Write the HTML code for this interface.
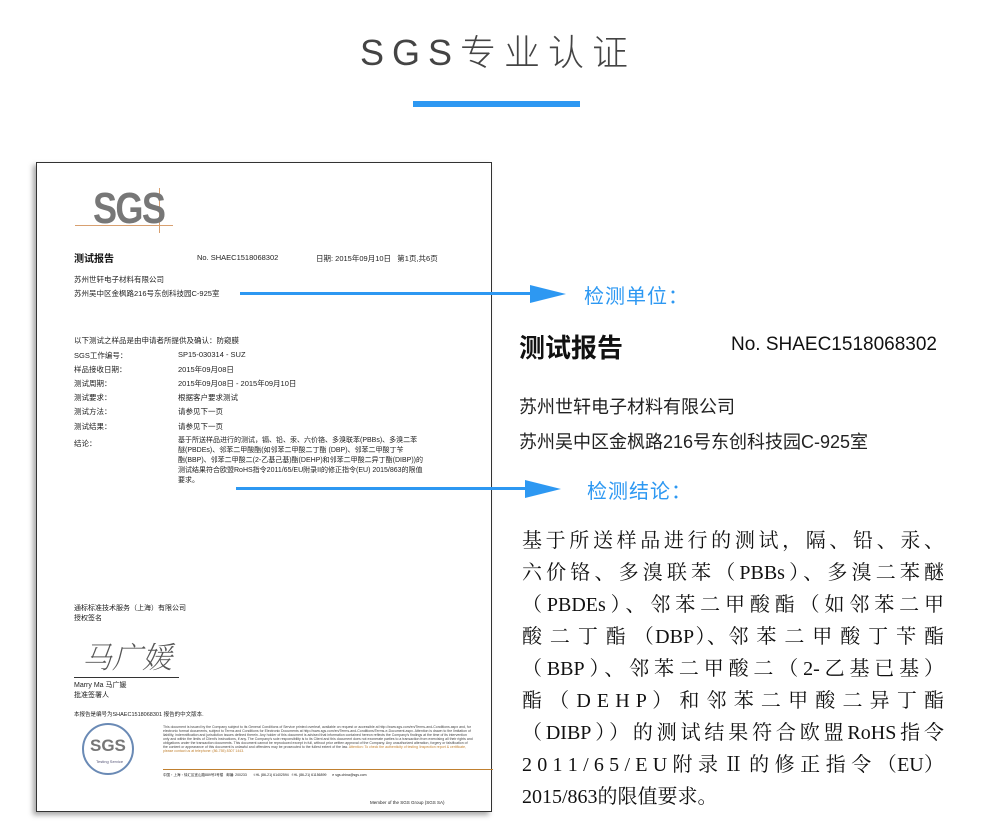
<!DOCTYPE html>
<html><head><meta charset="utf-8">
<style>
*{margin:0;padding:0;box-sizing:border-box}
body{width:989px;height:827px;background:#fff;position:relative;overflow:hidden;font-family:"Liberation Sans","Noto Sans CJK SC",sans-serif;color:#111}
.a{position:absolute;white-space:nowrap}
.title{left:360px;top:24px;font-size:36px;font-weight:300;letter-spacing:8px;color:#444;font-family:"Liberation Sans","Noto Sans CJK SC",sans-serif}
.bar{left:413px;top:101px;width:167px;height:6px;background:#2d98f2}
.doc{left:36px;top:162px;width:456px;height:650px;border:1.5px solid #333;box-shadow:-3px 3px 5px rgba(0,0,0,.35);background:#fff}
.d{position:absolute;white-space:nowrap;font-size:7.5px;color:#222}
.line{position:absolute;height:3px;background:#2d98f2}
.head{position:absolute;width:0;height:0;border-top:9px solid transparent;border-bottom:9px solid transparent;border-left:36px solid #2d98f2}
.lbl{font-size:20px;color:#2d98f2;letter-spacing:1px}
.con div{height:32px;line-height:32px;text-align:justify;text-align-last:justify;white-space:nowrap}
.con{position:absolute;left:522px;top:525px;width:422px;font-family:"Liberation Serif","Noto Serif CJK SC",serif;font-size:20px;color:#111}
</style></head><body>
<div class="a title">SGS专业认证</div>
<div class="a bar"></div>

<div class="a doc">
  <div class="d" style="left:38px;top:25px;width:98px;height:45px;">
    <div style="position:absolute;left:0;top:37px;width:98px;height:1px;background:#d8a070"></div>
    <div style="position:absolute;left:84px;top:0;width:1px;height:45px;background:#d8a070"></div>
    <div style="position:absolute;left:18px;top:-4px;font-size:44px;font-weight:bold;color:#777;letter-spacing:-2px;font-family:'Liberation Sans',sans-serif;transform:scaleX(.82);transform-origin:left">SGS</div>
  </div>
  <div class="d" style="left:37px;top:87px;font-size:10px;font-weight:bold;color:#111">测试报告</div>
  <div class="d" style="left:160px;top:90px">No. SHAEC1518068302</div>
  <div class="d" style="left:279px;top:90px">日期: 2015年09月10日 &nbsp; 第1页,共6页</div>
  <div class="d" style="left:37px;top:111px">苏州世轩电子材料有限公司</div>
  <div class="d" style="left:37px;top:125px">苏州吴中区金枫路216号东创科技园C-925室</div>
  <div class="d" style="left:37px;top:172px">以下测试之样品是由申请者所提供及确认：防窥膜</div>
  <div class="d" style="left:37px;top:187px">SGS工作编号：</div><div class="d" style="left:141px;top:187px">SP15-030314 - SUZ</div>
  <div class="d" style="left:37px;top:201px">样品接收日期：</div><div class="d" style="left:141px;top:201px">2015年09月08日</div>
  <div class="d" style="left:37px;top:215px">测试周期：</div><div class="d" style="left:141px;top:215px">2015年09月08日 - 2015年09月10日</div>
  <div class="d" style="left:37px;top:229px">测试要求：</div><div class="d" style="left:141px;top:229px">根据客户要求测试</div>
  <div class="d" style="left:37px;top:243px">测试方法：</div><div class="d" style="left:141px;top:243px">请参见下一页</div>
  <div class="d" style="left:37px;top:258px">测试结果：</div><div class="d" style="left:141px;top:258px">请参见下一页</div>
  <div class="d" style="left:37px;top:275px">结论：</div>
  <div class="d" style="left:141px;top:273px;line-height:10px;font-size:7px">基于所送样品进行的测试，镉、铅、汞、六价铬、多溴联苯(PBBs)、多溴二苯<br>醚(PBDEs)、邻苯二甲酸酯(如邻苯二甲酸二丁酯 (DBP)、邻苯二甲酸丁苄<br>酯(BBP)、邻苯二甲酸二(2-乙基己基)酯(DEHP)和邻苯二甲酸二异丁酯(DIBP))的<br>测试结果符合欧盟RoHS指令2011/65/EU附录II的修正指令(EU) 2015/863的限值<br>要求。</div>
  <div class="d" style="left:37px;top:441px;line-height:10px;font-size:7px">通标标准技术服务（上海）有限公司<br>授权签名</div>
  <div class="d" style="left:45px;top:470px;font-size:30px;color:#555;font-family:'Noto Serif CJK SC',serif;font-weight:200;font-style:italic">马广媛</div>
  <div class="d" style="left:37px;top:514px;width:105px;height:1px;background:#333"></div>
  <div class="d" style="left:37px;top:518px;line-height:10px;font-size:7px">Marry Ma 马广媛<br>批准签署人</div>
  <div class="d" style="left:37px;top:547px;font-size:5.5px">本报告是编号为SHAEC1518068301 报告的中文版本.</div>
  <div class="d" style="left:45px;top:560px;width:52px;height:52px;border:2px solid #6a8ab5;border-radius:50%"></div>
  <div class="d" style="left:53px;top:573px;font-size:17px;font-weight:bold;color:#777">SGS</div>
  <div class="d" style="left:59px;top:596px;font-size:4px;color:#557">Testing Service</div>
  <div class="d" style="left:126px;top:562px;width:310px;height:42px;font-size:3.5px;line-height:4px;color:#444;white-space:normal;overflow:hidden">This document is issued by the Company subject to its General Conditions of Service printed overleaf, available on request or accessible at http://www.sgs.com/en/Terms-and-Conditions.aspx and, for electronic format documents, subject to Terms and Conditions for Electronic Documents at http://www.sgs.com/en/Terms-and-Conditions/Terms-e-Document.aspx. Attention is drawn to the limitation of liability, indemnification and jurisdiction issues defined therein. Any holder of this document is advised that information contained hereon reflects the Company's findings at the time of its intervention only and within the limits of Client's instructions, if any. The Company's sole responsibility is to its Client and this document does not exonerate parties to a transaction from exercising all their rights and obligations under the transaction documents. This document cannot be reproduced except in full, without prior written approval of the Company. Any unauthorized alteration, forgery or falsification of the content or appearance of this document is unlawful and offenders may be prosecuted to the fullest extent of the law.<span style="color:#c08030"> Attention: To check the authenticity of testing /inspection report &amp; certificate, please contact us at telephone: (86-755) 8307 1443.</span></div>
  <div class="d" style="left:126px;top:606px;width:330px;height:1px;background:#c08030"></div>
  <div class="d" style="left:126px;top:609px;font-size:3.5px;line-height:7px">中国・上海・徐汇区宜山路889号3号楼 &nbsp; 邮编: 200233 &nbsp;&nbsp;&nbsp;&nbsp;&nbsp; t HL (86-21) 61402594 &nbsp; f HL (86-21) 61156899 &nbsp;&nbsp;&nbsp;&nbsp; e sgs.china@sgs.com</div>
  <div class="d" style="left:333px;top:637px;font-size:4.5px">Member of the SGS Group (SGS SA)</div>
</div>

<div class="line" style="left:240px;top:292px;width:300px"></div>
<div class="head" style="left:530px;top:285px"></div>
<div class="a lbl" style="left:584px;top:280px">检测单位：</div>
<div class="line" style="left:236px;top:487px;width:296px"></div>
<div class="head" style="left:525px;top:480px"></div>
<div class="a lbl" style="left:587px;top:475px">检测结论：</div>

<div class="a" style="left:519px;top:328px;font-size:26px;font-weight:bold">测试报告</div>
<div class="a" style="left:731px;top:334px;font-size:19px">No. SHAEC1518068302</div>
<div class="a" style="left:519px;top:393px;font-size:18px;color:#222">苏州世轩电子材料有限公司</div>
<div class="a" style="left:519px;top:428px;font-size:18px;color:#222">苏州吴中区金枫路216号东创科技园C-925室</div>

<div class="con">
<div>基于所送样品进行的测试，隔、铅、汞、</div>
<div>六价铬、多溴联苯（PBBs）、多溴二苯醚</div>
<div>（PBDEs）、邻苯二甲酸酯（如邻苯二甲</div>
<div>酸 二 丁 酯 （DBP）、邻 苯 二 甲 酸 丁 苄 酯</div>
<div>（BBP）、邻苯二甲酸二（2-乙基已基）</div>
<div>酯 （ D E H P ） 和 邻 苯 二 甲 酸 二 异 丁 酯</div>
<div>（DIBP））的测试结果符合欧盟RoHS指令</div>
<div>2 0 1 1 / 6 5 / E U 附 录 Ⅱ 的 修 正 指 令 （EU）</div>
<div style="text-align-last:left">2015/863的限值要求。</div>
</div>
</body></html>
